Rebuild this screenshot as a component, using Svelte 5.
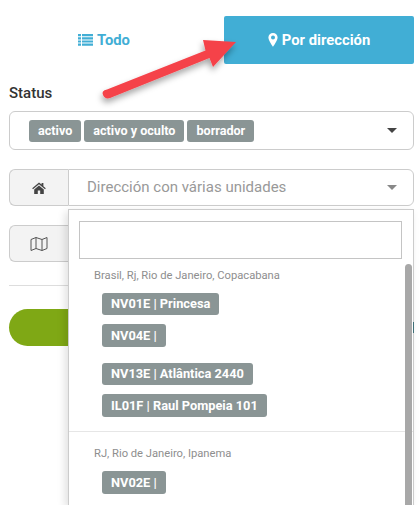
<script lang="ts">
	const statuses = ['activo', 'activo y oculto', 'borrador'];

	// some labels come with a taller chip and a bigger gap under them
	const groups = [
		{
			title: 'Brasil, Rj, Rio de Janeiro, Copacabana',
			units: [
				{ label: 'NV01E | Princesa' },
				{ label: 'NV04E |', tall: true, spaced: true },
				{ label: 'NV13E | Atlântica 2440' },
				{ label: 'IL01F | Raul Pompeia 101', tall: true }
			]
		},
		{
			title: 'RJ, Rio de Janeiro, Ipanema',
			units: [{ label: 'NV02E |', tall: true }]
		}
	];
</script>

<div class="page">
	<div class="tabs">
		<a class="tab" href="#todo">
			<svg class="icon-list" viewBox="0 0 15 12" aria-hidden="true">
				<path d="M0 0h3v2.2H0zM4 0h11v2.2H4zM0 3.200h3v2.200H0zM4 3.200h11v2.200H4zM0 6.400h3v2.200H0zM4 6.400h11v2.200H4zM0 9.600h3v2.200H0zM4 9.600h11v2.200H4z" fill="currentColor" />
			</svg>
			Todo
		</a>
		<a class="tab active" href="#direccion">
			<svg class="icon-pin" viewBox="0 0 10 14" aria-hidden="true">
				<path fill-rule="evenodd" d="M5 0a4.600 4.600 0 0 0-4.600 4.600C.4 7.600 5 14 5 14s4.600-6.400 4.600-9.400A4.600 4.600 0 0 0 5 0zm0 6.600a2 2 0 1 1 0-4 2 2 0 0 1 0 4z" fill="currentColor" />
			</svg>
			Por dirección
		</a>
	</div>

	<div class="status-label">Status</div>
	<div class="select status">
		<div class="tags">
			{#each statuses as s}
				<span class="tag">{s}</span>
			{/each}
		</div>
		<span class="caret dark"></span>
	</div>

	<div class="input-group">
		<span class="addon">
			<svg class="icon-home" viewBox="0 0 14 12" aria-hidden="true">
				<path d="M7 0.400 0.200 6.200l.8 1L7 2.200l6 5 .8-1L11.400 4.200V1h-1.800v1.600zM2.200 7.400V12h3.600V8.600h2.400V12h3.600V7.400L7 3.400z" fill="currentColor" />
			</svg>
		</span>
		<div class="select">
			<span class="placeholder">Dirección con várias unidades</span>
			<span class="caret"></span>
		</div>
	</div>

	<div class="input-group">
		<span class="addon">
			<svg class="icon-map" viewBox="0 0 18 16" aria-hidden="true">
				<path d="M1 3.500 6 1.500l6 2 5-2v11l-5 2-6-2-5 2zM6 1.500v11M12 3.500v11" fill="none" stroke="currentColor" stroke-width="1" />
			</svg>
		</span>
		<div class="select"></div>
	</div>

	<hr />
	<div class="green-button"></div>

	<div class="dropdown">
		<div class="search-box"></div>
		<div class="results">
			{#each groups as g, i}
				<div class="group" class:divided={i > 0}>
					<div class="group-title">{g.title}</div>
					{#each g.units as u}
						<div class="unit" class:spaced={u.spaced}>
							<span class="tag big" class:tall={u.tall}>{u.label}</span>
						</div>
					{/each}
				</div>
			{/each}
		</div>
		<div class="scrollbar"></div>
	</div>
	<div class="edge-sliver"></div>

	<svg class="arrow" viewBox="0 0 419 505" aria-hidden="true">
		<defs>
			<filter id="shadow" x="-20%" y="-20%" width="140%" height="150%">
				<feDropShadow dx="-1" dy="4" stdDeviation="3" flood-color="#000" flood-opacity="0.35" />
			</filter>
		</defs>
		<path
			d="M203 40 236 42 213 67 209.500 58 110 98Q105 99.500 103 95T107 89.500L205.500 50.500z"
			fill="#f5424a"
			filter="url(#shadow)"
		/>
	</svg>
</div>

<style>
	:global(body) {
		margin: 0;
		background: #fff;
	}

	.page {
		position: relative;
		width: 419px;
		height: 505px;
		overflow: hidden;
		box-sizing: border-box;
		padding: 16px 5px 0 9px;
		font-family: Roboto, 'Liberation Sans', sans-serif;
		color: #333;
	}

	.tabs {
		display: flex;
		justify-content: space-between;
	}

	.tab {
		width: 190px;
		height: 48px;
		display: flex;
		align-items: center;
		justify-content: center;
		gap: 4px;
		font-size: 14.800px;
		font-weight: 700;
		color: #41aed5;
		text-decoration: none;
		border-radius: 2px;
	}

	.tab.active {
		background: #41aed5;
		color: #fff;
	}

	.icon-list {
		width: 15px;
		height: 12px;
	}

	.icon-pin {
		width: 10px;
		height: 14px;
	}

	.status-label {
		margin-top: 21px;
		font-size: 15px;
		font-weight: 500;
		line-height: 17px;
		color: #333;
	}

	.select {
		box-sizing: border-box;
		display: flex;
		align-items: center;
		justify-content: space-between;
		border: 1px solid #ccc;
		border-radius: 6px;
		background: #fff;
	}

	.status {
		height: 39px;
		margin-top: 9px;
		padding: 0 16px 0 19px;
	}

	.tags {
		display: flex;
		gap: 3px;
	}

	.tag {
		display: inline-block;
		background: #8a9595;
		color: #fff;
		font-size: 12.600px;
		font-weight: 700;
		line-height: 22px;
		padding: 0 9px;
		border-radius: 3px;
	}

	.tag.big {
		font-size: 12.800px;
	}

	.tag.tall {
		line-height: 23px;
	}

	.caret {
		width: 0;
		height: 0;
		border-left: 5px solid transparent;
		border-right: 5px solid transparent;
		border-top: 5px solid #888;
	}

	.caret.dark {
		border-top-color: #444;
	}

	.input-group {
		display: flex;
		height: 37px;
		margin-top: 19px;
	}

	.addon {
		box-sizing: border-box;
		width: 59px;
		display: flex;
		align-items: center;
		justify-content: center;
		background: #f3f3f3;
		border: 1px solid #ccc;
		border-right: 0;
		border-radius: 6px 0 0 6px;
		color: #444;
	}

	.icon-home {
		width: 14px;
		height: 12px;
	}

	.icon-map {
		width: 18px;
		height: 16px;
		color: #555;
	}

	.input-group .select {
		flex: 1;
		border-radius: 0 6px 6px 0;
		padding: 0 16px 0 18px;
	}

	.placeholder {
		font-size: 15px;
		color: #999;
		margin-top: -2px;
	}

	hr {
		height: 1px;
		margin: 23px 0;
		border: 0;
		background: #ddd;
	}

	.green-button {
		height: 37px;
		border-radius: 19px;
		background: #7fa815;
	}

	.dropdown {
		position: absolute;
		left: 68px;
		top: 209px;
		width: 346px;
		height: 296px;
		box-sizing: border-box;
		border: 1px solid #ccc;
		border-bottom: 0;
		background: #fff;
		box-shadow: -3px 3px 8px rgba(0, 0, 0, 0.12);
		overflow: hidden;
	}

	.search-box {
		box-sizing: border-box;
		height: 38px;
		margin: 11px 11px 0 10px;
		border: 1px solid #c4c4c4;
	}

	.results {
		padding-top: 9px;
	}

	.group {
		padding-bottom: 5px;
	}

	.group.divided {
		border-top: 1px solid #e6e6e6;
		padding-top: 14px;
	}

	.group-title {
		padding-left: 25px;
		font-size: 11.200px;
		line-height: 15px;
		color: #8e8e8e;
		margin-bottom: 10px;
	}

	.unit {
		padding-left: 33px;
		margin-bottom: 9px;
		line-height: 0;
	}

	.unit.spaced {
		margin-bottom: 16px;
	}

	.scrollbar {
		position: absolute;
		right: 1px;
		top: 54px;
		bottom: 0;
		width: 7px;
		border-radius: 4px 4px 0 0;
		background: #a8a8a8;
	}

	.edge-sliver {
		position: absolute;
		left: 413px;
		top: 322px;
		width: 1px;
		height: 11px;
		background: #3f6f78;
	}

	.arrow {
		position: absolute;
		left: 0;
		top: 0;
		width: 419px;
		height: 505px;
		pointer-events: none;
	}
</style>
